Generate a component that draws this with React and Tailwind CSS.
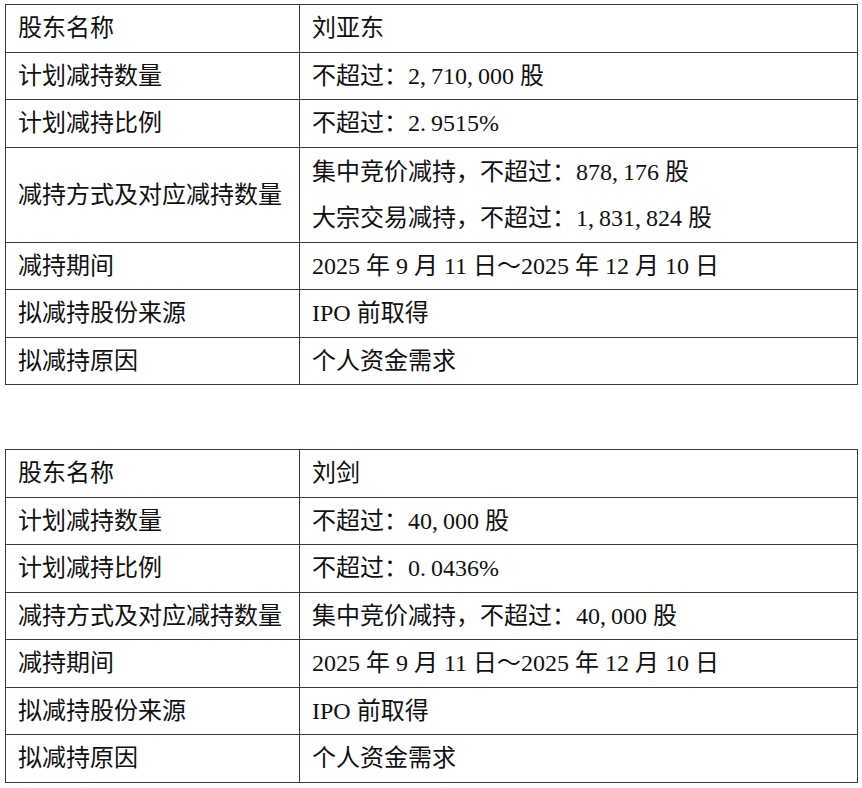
const font = {
  fontFamily: '"Liberation Serif", "Noto Sans CJK SC", serif',
};

// 数字里的逗号、小数点按半角等宽处理
function Num({ s }) {
  return (
    <>
      {s.split("").map((c, i) =>
        c === "," || c === "." ? (
          <span key={i} className="inline-block w-[11px]">
            {c}
          </span>
        ) : (
          c
        )
      )}
    </>
  );
}

const first = [
  { label: "股东名称", value: ["刘亚东"] },
  { label: "计划减持数量", value: [<>不超过：<Num s="2,710,000" /> 股</>] },
  { label: "计划减持比例", value: [<>不超过：<Num s="2.9515" />%</>] },
  {
    label: "减持方式及对应减持数量",
    wide: true,
    value: [
      <>集中竞价减持，不超过：<Num s="878,176" /> 股</>,
      <>大宗交易减持，不超过：<Num s="1,831,824" /> 股</>,
    ],
  },
  { label: "减持期间", value: ["2025 年 9 月 11 日～2025 年 12 月 10 日"] },
  { label: "拟减持股份来源", value: ["IPO 前取得"] },
  { label: "拟减持原因", value: ["个人资金需求"] },
];

const second = [
  { label: "股东名称", value: ["刘剑"] },
  { label: "计划减持数量", value: [<>不超过：<Num s="40,000" /> 股</>] },
  { label: "计划减持比例", value: [<>不超过：<Num s="0.0436" />%</>] },
  {
    label: "减持方式及对应减持数量",
    wide: true,
    value: [<>集中竞价减持，不超过：<Num s="40,000" /> 股</>],
  },
  { label: "减持期间", value: ["2025 年 9 月 11 日～2025 年 12 月 10 日"] },
  { label: "拟减持股份来源", value: ["IPO 前取得"] },
  { label: "拟减持原因", value: ["个人资金需求"] },
];

function Row({ row }) {
  const tall = row.value.length > 1;
  return (
    <div
      className={`grid grid-cols-[294px_1fr] border-b border-[#3a3a3a] ${
        tall ? "h-[95px]" : "h-[47.5px]"
      }`}
    >
      <div className="flex items-center whitespace-nowrap border-r border-[#3a3a3a] pl-[12px]">
        {row.wide ? (
          <span className="flex w-[264px] justify-between">
            {row.label.split("").map((c, i) => (
              <span key={i}>{c}</span>
            ))}
          </span>
        ) : (
          row.label
        )}
      </div>
      <div className="flex flex-col justify-center whitespace-nowrap pl-[12px]">
        {row.value.map((v, i) => (
          <div key={i} className={tall ? "leading-[46px]" : ""}>
            {v}
          </div>
        ))}
      </div>
    </div>
  );
}

function HoldTable({ rows }) {
  return (
    <div className="w-[853px] border-x border-t border-[#3a3a3a]">
      {rows.map((r) => (
        <Row key={r.label} row={r} />
      ))}
    </div>
  );
}

export default function App() {
  return (
    <div
      className="min-h-[788px] w-[862px] bg-white pl-[5px] pt-[4px] text-[24px] text-[#111]"
      style={font}
    >
      <HoldTable rows={first} />
      <div className="h-[64px]" />
      <HoldTable rows={second} />
    </div>
  );
}
